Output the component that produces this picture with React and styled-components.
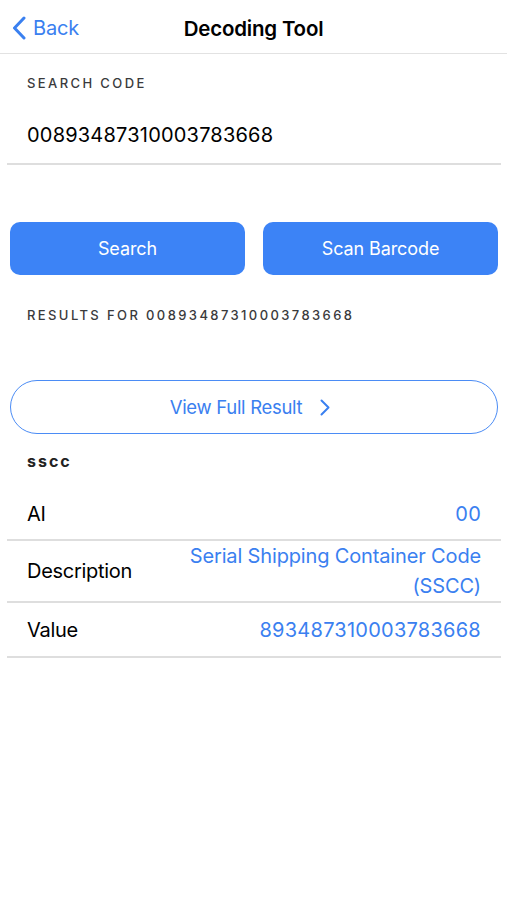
import React from "react";
import styled, { createGlobalStyle } from "styled-components";

const Global = createGlobalStyle`
  html, body { margin: 0; padding: 0; background: #fff; }
  body { font-family: Inter, "Noto Sans", "Liberation Sans", sans-serif; color: #000; -webkit-font-smoothing: antialiased; }
  * { box-sizing: border-box; }
`;

const BLUE = "#3c83f6";
const LINK = "#3a80f0";

const Page = styled.div`
  width: 507px;
  min-height: 900px;
  display: flex;
  flex-direction: column;
`;

const NavBar = styled.header`
  height: 54px;
  padding-top: 3px;
  display: grid;
  grid-template-columns: 1fr auto 1fr;
  align-items: center;
  border-bottom: 1.5px solid #e2e2e2;
`;

const BackButton = styled.button`
  justify-self: start;
  display: flex;
  align-items: center;
  gap: 7px;
  padding: 0 0 0 12px;
  border: 0;
  background: none;
  color: ${LINK};
  font-family: inherit;
  font-size: 20px;
  letter-spacing: -0.2px;
  line-height: 24px;
`;

const Title = styled.h1`
  margin: 0;
  font-size: 20.5px;
  font-weight: 600;
  letter-spacing: -0.2px;
`;

const Section = styled.section`
  margin: 0 6px 0 7px;
  padding: 0 20px;
  border-bottom: ${(p) => (p.$divided ? "2px solid #dedede" : "none")};
`;

const Caption = styled.div`
  margin-top: ${(p) => p.$top}px;
  font-size: 13px;
  line-height: 16px;
  font-weight: 500;
  letter-spacing: 2.4px;
  color: #3a3a3c;
  text-transform: uppercase;
  padding-left: ${(p) => p.$inset || 0}px;
`;

const CodeValue = styled.div`
  margin-top: 32px;
  padding-bottom: 16px;
  font-size: 20px;
  line-height: 24px;
  letter-spacing: 0.2px;
`;

const ButtonRow = styled.div`
  margin-top: 57px;
  padding: 0 9px 0 10px;
  display: grid;
  grid-template-columns: 1fr 1fr;
  gap: 18px;
`;

const FilledButton = styled.button`
  height: 53px;
  border: 0;
  border-radius: 10px;
  background: ${BLUE};
  color: #fff;
  font-family: inherit;
  font-size: 18px;
  letter-spacing: -0.1px;
`;

const OutlineButton = styled.button`
  margin: 57px 9px 0 10px;
  height: 54px;
  border: 1.5px solid #4b8cf5;
  border-radius: 27px;
  background: #fff;
  color: ${LINK};
  font-family: inherit;
  font-size: 18.5px;
  letter-spacing: -0.3px;
  display: flex;
  align-items: center;
  justify-content: center;
  gap: 18px;
  padding: 0 8px 0 0;
`;

const GroupTitle = styled.div`
  margin: 18px 0 0 27px;
  font-size: 16px;
  line-height: 18px;
  font-weight: 700;
  letter-spacing: 2px;
  color: #222;
`;

const Table = styled.div`
  margin: 18px 6px 0 7px;
  display: flex;
  flex-direction: column;
`;

const Row = styled.div`
  min-height: ${(p) => p.$h}px;
  display: flex;
  align-items: center;
  justify-content: space-between;
  gap: 20px;
  padding: 0 20px;
  border-bottom: 2px solid #dedede;
`;

const RowLabel = styled.span`
  font-size: 20px;
  letter-spacing: -0.3px;
  white-space: nowrap;
`;

const RowValue = styled.span`
  font-size: 20px;
  line-height: 30px;
  letter-spacing: ${(p) => (p.$digits ? "0.25px" : "-0.15px")};
  color: ${LINK};
  text-align: right;
  max-width: ${(p) => p.$max || 400}px;
`;

const ChevronLeft = () => (
  <svg width="14" height="24" viewBox="0 0 14 24" fill="none">
    <path d="M12 2 L2.5 12 L12 22" stroke={LINK} strokeWidth="3" strokeLinecap="round" strokeLinejoin="round" />
  </svg>
);

const ChevronRight = () => (
  <svg width="10" height="17" viewBox="0 0 10 17" fill="none">
    <path d="M1.5 1.5 L8.5 8.5 L1.5 15.5" stroke={LINK} strokeWidth="2" strokeLinecap="round" strokeLinejoin="round" />
  </svg>
);

export default function App() {
  return (
    <Page>
      <Global />
      <NavBar>
        <BackButton>
          <ChevronLeft />
          Back
        </BackButton>
        <Title>Decoding Tool</Title>
        <span />
      </NavBar>

      <Section $divided>
        <Caption $top={21}>Search Code</Caption>
        <CodeValue>00893487310003783668</CodeValue>
      </Section>

      <ButtonRow>
        <FilledButton>Search</FilledButton>
        <FilledButton>Scan Barcode</FilledButton>
      </ButtonRow>

      <Caption $top={32} $inset={27}>Results for 00893487310003783668</Caption>

      <OutlineButton>
        View Full Result
        <ChevronRight />
      </OutlineButton>

      <GroupTitle>sscc</GroupTitle>

      <Table>
        <Row $h={53}>
          <RowLabel>AI</RowLabel>
          <RowValue $digits>00</RowValue>
        </Row>
        <Row $h={62}>
          <RowLabel>Description</RowLabel>
          <RowValue $max={300}>Serial Shipping Container Code (SSCC)</RowValue>
        </Row>
        <Row $h={55}>
          <RowLabel>Value</RowLabel>
          <RowValue $digits>893487310003783668</RowValue>
        </Row>
      </Table>
    </Page>
  );
}
